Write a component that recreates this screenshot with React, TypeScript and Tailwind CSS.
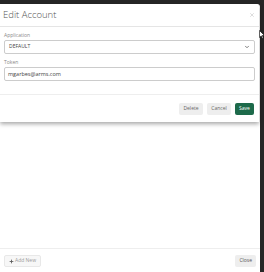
import { ChevronDown, Plus, X } from 'lucide-react';

const font = { fontFamily: '"Open Sans", "Liberation Sans", sans-serif' };

function Field({ label, children }: { label: string; children: React.ReactNode }) {
  return (
    <div className="flex flex-col">
      <label className="text-[5px] leading-[7px] text-[#888] mb-[1px]">{label}</label>
      {children}
    </div>
  );
}

export default function App() {
  return (
    <div className="relative w-[264px] h-[272px] bg-[#262626] pt-[4px] overflow-hidden" style={font}>
      {/* background panel */}
      <div className="relative w-[260px] h-[268px] bg-white rounded-tr-[3px] flex flex-col">
        <div className="flex-1" />
        <div className="border-t border-[#eeeeee] h-[24px] flex items-start justify-between px-[4px] pt-[6px]">
          <button className="h-[12px] px-[4px] flex items-center gap-[1px] bg-[#f7f7f7] border border-[#e8e8e8] rounded-[2px] text-[5px] text-[#999]">
            <Plus className="w-[5px] h-[5px] text-[#555]" strokeWidth={4} />
            Add New
          </button>
          <button className="h-[12px] px-[4px] bg-[#eeeeee] rounded-[2px] text-[5px] text-[#555]">Close</button>
        </div>

        {/* edit account modal */}
        <div className="absolute top-0 left-0 w-[259px] bg-white rounded-tr-[3px] shadow-[0_2px_4px_rgba(0,0,0,0.35)]">
          <div className="h-[23px] border-b border-[#e5e5e5] flex items-center justify-between pl-[3px] pr-[4px]">
            <h1 className="text-[9.5px] font-light text-[#555]">Edit Account</h1>
            <X className="w-[6px] h-[6px] text-[#bbb]" strokeWidth={2} />
          </div>
          <div className="px-[4px] pt-[5px] pb-[13px] flex flex-col gap-[5px] border-b border-[#eeeeee]">
            <Field label="Application">
              <div className="h-[14px] border border-[#cccccc] rounded-[2px] flex items-center justify-between px-[4px] text-[5px] text-[#444]">
                <span>DEFAULT</span>
                <ChevronDown className="w-[6px] h-[6px] text-[#555]" strokeWidth={3} />
              </div>
            </Field>
            <Field label="Token">
              <div className="h-[14px] border border-[#cccccc] rounded-[2px] flex items-center px-[3px] text-[5.5px] text-[#444]">
                mgarbes@arms.com
              </div>
            </Field>
          </div>
          <div className="h-[27px] flex items-center justify-end gap-[4px] pr-[5px]">
            <button className="h-[12px] w-[24px] bg-[#eeeeee] rounded-[2px] text-[5px] text-[#666]">Delete</button>
            <button className="h-[12px] w-[24px] bg-[#eeeeee] rounded-[2px] text-[5px] text-[#666]">Cancel</button>
            <button className="h-[12px] w-[19px] bg-[#1d6a4a] rounded-[2px] text-[5px] text-white">Save</button>
          </div>
        </div>
      </div>

      {/* mouse pointer */}
      <svg className="absolute left-[259px] top-[30px]" width="6" height="9" viewBox="0 0 6 9">
        <path d="M0.5 0.5 L0.5 7.5 L2.2 5.9 L3.4 8.5 L4.4 8 L3.3 5.5 L5.5 5.5 Z" fill="#fff" stroke="#000" strokeWidth="0.6" />
      </svg>
    </div>
  );
}
